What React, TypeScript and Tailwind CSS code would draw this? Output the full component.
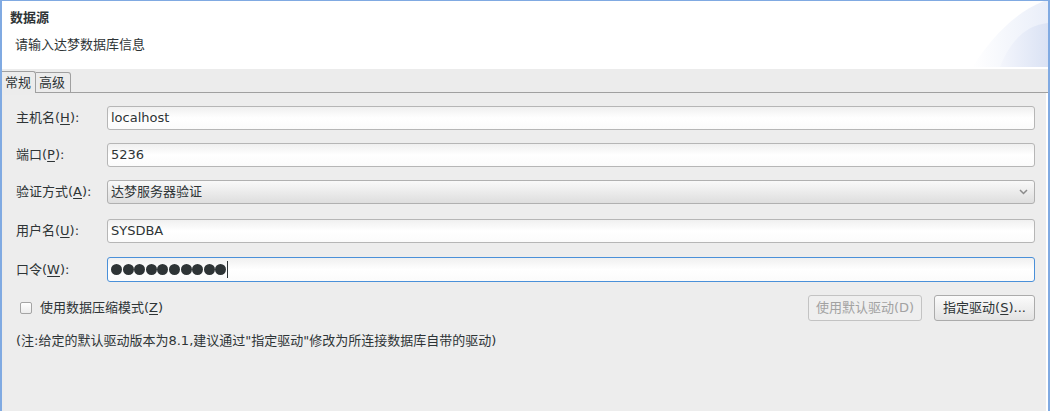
import React from "react";

const font = {
  fontFamily: '"DejaVu Sans", "Noto Sans CJK SC", sans-serif',
};

function Label({ text, mn, extra = "" }: { text: string; mn: string; extra?: string }) {
  return (
    <div className="w-[91px] shrink-0 text-[13px] text-[#2e3436]">
      {text}(<span className="underline underline-offset-2">{mn}</span>){extra}
    </div>
  );
}

function Field({ value, className = "" }: { value: string; className?: string }) {
  return (
    <div
      className={
        "flex-1 h-[24px] rounded-[3px] border border-[#b6b6b6] bg-gradient-to-b from-[#f0f0f0] via-white to-[#fbfbfb] px-[3px] flex items-center text-[13px] text-[#2e3436] " +
        className
      }
    >
      {value}
    </div>
  );
}

export default function App() {
  return (
    <div
      style={font}
      className="w-[1050px] h-[411px] overflow-hidden border-t border-l-2 border-r-2 border-[#80aae2] bg-[#ececec] flex flex-col"
    >
      {/* header */}
      <div className="h-[68px] bg-white flex shrink-0">
        <div className="flex-1 pl-[8px] pt-[9px]">
          <div className="text-[13px] font-bold text-[#2e3436] leading-[16px]">数据源</div>
          <div className="text-[13px] text-[#2e3436] pl-[5px] mt-[11px] leading-[16px]">
            请输入达梦数据库信息
          </div>
        </div>
        <svg width="80" height="66" viewBox="0 0 80 66" className="shrink-0">
          <defs>
            <linearGradient id="g1" x1="0" y1="0" x2="1" y2="0">
              <stop offset="0" stopColor="#ffffff" />
              <stop offset="1" stopColor="#e9eef9" />
            </linearGradient>
            <linearGradient id="g2" x1="0" y1="0" x2="1" y2="0">
              <stop offset="0" stopColor="#f4f6fc" />
              <stop offset="1" stopColor="#dae2f4" />
            </linearGradient>
          </defs>
          <path d="M4 66 C 22 40, 42 14, 76 0 L80 0 L80 66 Z" fill="url(#g1)" />
          <path d="M32 66 C 42 40, 58 24, 80 22 L80 66 Z" fill="url(#g2)" />
        </svg>
      </div>

      {/* tabs */}
      <div className="h-[24px] flex items-end shrink-0">
        <div className="h-[22px] w-[34px] border-t border-r border-[#a0a0a0] rounded-tr-[3px] bg-[#ececec] flex items-center pl-[3px] text-[13px] text-[#2e3436]">
          常规
        </div>
        <div className="h-[21px] w-[35px] border-t border-r border-b border-[#a0a0a0] rounded-tr-[3px] flex items-center pl-[3px] text-[13px] text-[#2e3436]">
          高级
        </div>
        <div className="flex-1 border-b border-[#a0a0a0]" />
      </div>

      {/* content */}
      <div className="flex-1 flex">
        <div className="flex-1 ml-[2px] mt-[2px] bg-[#ededed] pl-[12px] pr-[11px] pt-[11px]">
          <div className="flex items-center">
            <Label text="主机名" mn="H" extra=":" />
            <Field value="localhost" />
          </div>
          <div className="flex items-center mt-[13px]">
            <Label text="端口" mn="P" extra=":" />
            <Field value="5236" />
          </div>
          <div className="flex items-center mt-[13px]">
            <Label text="验证方式" mn="A" extra=":" />
            <div className="flex-1 h-[24px] rounded-[3px] border border-[#b0b0b0] bg-gradient-to-b from-[#f9f9f9] to-[#dedede] px-[3px] flex items-center justify-between text-[13px] text-[#2e3436]">
              <span>达梦服务器验证</span>
              <svg width="9" height="6" viewBox="0 0 9 6" className="mr-[3px]">
                <path d="M1 1 L4.5 4.5 L8 1" fill="none" stroke="#8a8a8a" strokeWidth="1.5" />
              </svg>
            </div>
          </div>
          <div className="flex items-center mt-[15px]">
            <Label text="用户名" mn="U" extra=":" />
            <Field value="SYSDBA" />
          </div>
          <div className="flex items-center mt-[14px]">
            <Label text="口令" mn="W" extra=":" />
            <div className="flex-1 h-[25px] rounded-[3px] border border-[#4a90d9] bg-gradient-to-b from-[#f0f0f0] via-white to-[#fbfbfb] px-[3px] flex items-center">
              <div className="flex gap-[0.6px]">
                {Array.from({ length: 10 }).map((_, i) => (
                  <span key={i} className="w-[11px] h-[11px] rounded-full bg-[#2e3436] inline-block" />
                ))}
              </div>
              <span className="w-[1px] h-[17px] bg-[#2e3436] ml-[1px]" />
            </div>
          </div>
          <div className="flex items-center mt-[13px] h-[26px]">
            <div className="flex items-center flex-1 pl-[4px]">
              <span className="w-[12px] h-[12px] rounded-[2px] border border-[#a4a4a4] bg-gradient-to-b from-white to-[#ececec]" />
              <span className="ml-[8px] text-[13px] text-[#2e3436]">
                使用数据压缩模式(<span className="underline underline-offset-2">Z</span>)
              </span>
            </div>
            <div className="h-[26px] w-[114px] rounded-[3px] border border-[#c3c3c3] bg-[#efefef] text-[13px] text-[#a2a2a2] flex items-center justify-center">
              使用默认驱动(D)
            </div>
            <div className="h-[26px] w-[101px] ml-[12px] rounded-[3px] border border-[#ababab] bg-gradient-to-b from-[#fbfbfb] to-[#e3e3e3] text-[13px] text-[#2e3436] flex items-center justify-center">
              指定驱动(<span className="underline underline-offset-2">S</span>)...
            </div>
          </div>
          <div className="mt-[10px] text-[13px] text-[#2e3436]">
            (注:给定的默认驱动版本为8.1,建议通过"指定驱动"修改为所连接数据库自带的驱动)
          </div>
        </div>
        <div className="w-[2px] bg-white" />
      </div>
    </div>
  );
}
